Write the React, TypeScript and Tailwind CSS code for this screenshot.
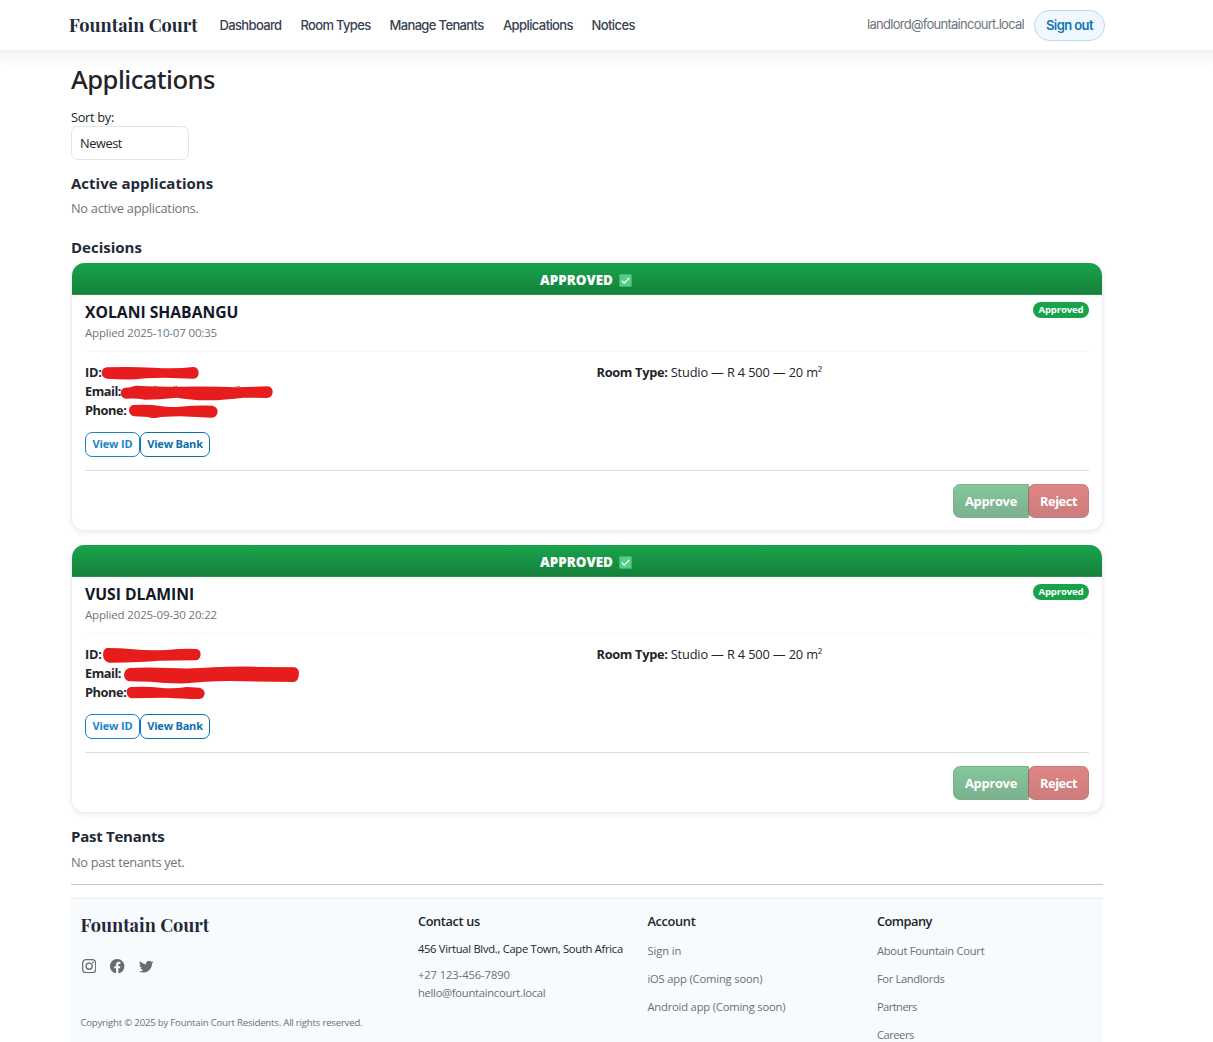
import type { ReactNode } from "react";
import { BsFacebook, BsInstagram, BsTwitter } from "react-icons/bs";

const sans = "font-['Open_Sans','Noto_Sans',sans-serif]";

type Link = { label: string; tracking: string };

const navLinks: Link[] = [
  { label: "Dashboard", tracking: "w-[81px] tracking-[-0.646px]" },
  { label: "Room Types", tracking: "w-[89px] tracking-[-0.68px]" },
  { label: "Manage Tenants", tracking: "w-[113.5px] tracking-[-0.647px]" },
  { label: "Applications", tracking: "w-[88.5px] tracking-[-0.603px]" },
  { label: "Notices", tracking: "tracking-[-0.6px]" },
];

function Header() {
  return (
    <header className="flex h-[51px] shrink-0 items-center border-b border-[#eeeef4] bg-white pr-[108px] pl-[69px] font-['Inter',sans-serif] text-[13px] shadow-[0_2px_16px_6px_rgba(0,0,0,0.05)]">
      <div className="w-[150.5px] font-['Playfair_Display','Liberation_Serif',serif] text-[18.2px] font-bold whitespace-nowrap text-[#1f2937]">
        Fountain Court
      </div>
      <nav className="flex pt-[2px] font-medium text-[#374151]">
        {navLinks.map((l) => (
          <a key={l.label} className={`whitespace-nowrap ${l.tracking}`}>
            {l.label}
          </a>
        ))}
      </nav>
      <div className="ml-auto flex items-center">
        <span className="mr-[10px] tracking-[-0.722px] text-[#6c757d]">landlord@fountaincourt.local</span>
        <button className="h-[31px] w-[71px] rounded-full border border-[#b5dcf2] bg-[#f0f8fd] pt-[2px] font-semibold tracking-[-0.586px] text-[#0f75b5]">
          Sign out
        </button>
      </div>
    </header>
  );
}

function ApprovedMark() {
  return (
    <svg width="13" height="13" viewBox="0 0 13 13" className="ml-[6px]">
      <rect x="0.5" y="0.5" width="12" height="12" rx="0.6" fill="#52ce85" stroke="#3fb873" strokeWidth="0.8" />
      <path d="M2.8 6.7 5.2 9.1 10.3 4" fill="none" stroke="#fff" strokeWidth="1.2" />
    </svg>
  );
}

const ink = "#e71d1d";

function FirstRedaction() {
  return (
    <svg width="220" height="60" viewBox="45 24 660 180" className="absolute top-0 left-0" fill={ink}>
      <path d="M112 37Q180 34 250 38T370 36Q386 38 386 53Q386 70 370 71L280 68Q220 68 200 73Q150 74 112 71Q95 68 95 54Q96 38 112 37Z" />
      <path d="M253 94h7M311 94h5M318 94h4M362 97h12M497 94h5M504 94h5" stroke="#6b1a1a" strokeWidth="2" />
      <path d="M166 98L182 97Q188 92 200 92Q260 95 330 95Q430 93 500 97L594 94Q609 98 608 112Q607 128 590 129L520 128Q470 135 410 136Q360 135 320 128Q270 134 225 134Q200 129 168 131Q152 128 152 114Q153 100 166 98Z" />
      <path d="M190 150Q240 148 270 153T330 155Q380 150 428 152Q443 156 443 170Q441 187 426 188L330 184Q280 185 262 188Q240 190 235 186L192 184Q177 180 177 166Q178 152 190 150Z" />
    </svg>
  );
}

function SecondRedaction() {
  return (
    <svg width="220" height="60" viewBox="45 15 660 180" className="absolute top-0 left-0" fill={ink}>
      <path d="M110 24Q150 24 190 28T290 30Q340 25 380 27Q392 31 392 44Q390 60 376 61L270 62Q220 66 118 68Q100 64 99 45Q99 28 110 24Z" />
      <path d="M178 84Q230 81 300 84T430 82Q520 78 580 81L675 82Q687 86 687 101Q685 124 672 126L480 123Q400 124 350 130Q290 131 240 125L176 124Q162 118 162 104Q164 88 178 84Z" />
      <path d="M182 141Q230 138 270 143T350 141L390 143Q405 149 404 161Q402 175 388 177Q330 176 290 173L184 175Q170 171 170 157Q170 144 182 141Z" />
    </svg>
  );
}

type Application = { name: string; applied: string; redaction: ReactNode };

const applications: Application[] = [
  { name: "XOLANI SHABANGU", applied: "2025-10-07 00:35", redaction: <FirstRedaction /> },
  { name: "VUSI DLAMINI", applied: "2025-09-30 20:22", redaction: <SecondRedaction /> },
];

function ApplicationCard({ app }: { app: Application }) {
  return (
    <article className="mb-[14px] h-[268px] overflow-hidden rounded-[13px] border border-t-0 border-[#ececf2] bg-white shadow-[0_2px_5px_rgba(0,0,0,0.07)]">
      <div className="flex h-[32px] items-center justify-center border-b border-[#30914f] bg-linear-to-b from-[#18a54b] to-[#15803b] pt-[4px] pr-[2px] text-[13.4px] font-extrabold text-white">
        APPROVED
        <ApprovedMark />
      </div>
      <div className="px-[13px]">
        <div className="flex h-[57px] justify-between border-b border-[#f8f8fa] pt-[7px]">
          <div>
            <h3 className="text-[15.7px] leading-[21px] font-bold text-[#111827]">{app.name}</h3>
            <p className="text-[11.5px] leading-[20px] tracking-[-0.165px] text-[#6c757d]">Applied {app.applied}</p>
          </div>
          <span className="flex h-[16px] w-[56px] items-center justify-center rounded-full bg-[#16a34a] text-[9.6px] font-bold tracking-[-0.158px] text-white">
            Approved
          </span>
        </div>
        <div className="grid grid-cols-[511.5px_1fr] pt-[11px] text-[12.8px] leading-[19px] text-[#212529]">
          <div className="relative font-bold">
            <p className="tracking-[-0.286px]">ID:</p>
            <p className="tracking-[-0.487px]">Email:</p>
            <p className="tracking-[-0.417px]">Phone:</p>
            {app.redaction}
          </div>
          <p className="tracking-[-0.152px]">
            <b className="tracking-[-0.319px]">Room Type:</b> Studio — R 4 500 — 20 m²
          </p>
        </div>
        <div className="mt-[12px] flex text-[11px] font-bold">
          <button className="h-[25px] w-[55px] rounded-[7px] border border-[#1b84cb] tracking-[-0.152px] text-[#1b84cb]">View ID</button>
          <button className="h-[25px] w-[70px] rounded-[7px] border border-[#0c6fae] tracking-[-0.208px] text-[#0c6fae]">View Bank</button>
        </div>
        <hr className="mt-[13px] border-[#dcdddf]" />
        <div className="mt-[13px] flex justify-end text-[12.8px] font-bold text-white">
          <button className="h-[34px] w-[76px] rounded-l-[7px] border border-[#78b28c] bg-linear-to-b from-[#84c79a] to-[#7cb18f] pt-[2px] tracking-[-0.23px]">
            Approve
          </button>
          <button className="-ml-px h-[34px] w-[61px] rounded-[7px] border border-[#cb7878] border-l-[#a86464] bg-linear-to-b from-[#df8585] to-[#cb7d7d] pt-[2px] tracking-[-0.435px]">
            Reject
          </button>
        </div>
      </div>
    </article>
  );
}

const accountLinks: Link[] = [
  { label: "Sign in", tracking: "tracking-[-0.071px]" },
  { label: "iOS app (Coming soon)", tracking: "tracking-[-0.164px]" },
  { label: "Android app (Coming soon)", tracking: "tracking-[-0.181px]" },
];

const companyLinks: Link[] = [
  { label: "About Fountain Court", tracking: "tracking-[-0.256px]" },
  { label: "For Landlords", tracking: "tracking-[-0.35px]" },
  { label: "Partners", tracking: "tracking-[-0.57px]" },
  { label: "Careers", tracking: "tracking-[-0.473px]" },
];

function LinkColumn({ title, titleTracking, links }: { title: string; titleTracking: string; links: Link[] }) {
  return (
    <div>
      <h4 className={`text-[12.8px] leading-[20px] font-semibold text-[#212529] ${titleTracking}`}>{title}</h4>
      <ul className="mt-[6px]">
        {links.map((l) => (
          <li key={l.label} className={`leading-[28px] whitespace-nowrap ${l.tracking}`}>
            {l.label}
          </li>
        ))}
      </ul>
    </div>
  );
}

function Footer() {
  return (
    <footer className="mt-[13px] grid h-[180px] grid-cols-[337.5px_229.5px_229.5px_1fr] border-t border-[#e9eaeb] bg-[#f7fbfe] pt-[12px] pl-[9.4px] text-[11.2px] text-[#6c6f73]">
      <div>
        <div className="font-['Playfair_Display','Liberation_Serif',serif] text-[18.2px] leading-[28px] font-bold text-[#1f2937]">
          Fountain Court
        </div>
        <div className="mt-[20px] ml-[1.6px] flex gap-[14px] text-[14.4px] text-[#6b6b6b]">
          <BsInstagram />
          <BsFacebook />
          <BsTwitter />
        </div>
        <p className="mt-[40px] text-[9.6px] leading-[20px] tracking-[-0.197px]">
          Copyright © 2025 by Fountain Court Residents. All rights reserved.
        </p>
      </div>
      <div>
        <h4 className="text-[12.8px] leading-[20px] font-semibold tracking-[-0.364px] text-[#212529]">Contact us</h4>
        <p className="mt-[9px] leading-[18px] tracking-[-0.286px] whitespace-nowrap text-[#212529]">
          456 Virtual Blvd., Cape Town, South Africa
        </p>
        <p className="mt-[8px] leading-[18px] tracking-[-0.079px]">+27 123-456-7890</p>
        <p className="leading-[18px] tracking-[-0.263px]">hello@fountaincourt.local</p>
      </div>
      <LinkColumn title="Account" titleTracking="tracking-[-0.33px]" links={accountLinks} />
      <LinkColumn title="Company" titleTracking="tracking-[-0.5px]" links={companyLinks} />
    </footer>
  );
}

export default function App() {
  return (
    <div className={`flex h-[1042px] flex-col overflow-hidden bg-white text-[12.8px] text-[#212529] ${sans}`}>
      <Header />
      <main className="ml-[71px] w-[1032px]">
        <h1 className="mt-[14px] font-['Noto_Sans',sans-serif] text-[25.6px] leading-[30px] font-medium tracking-[-0.53px]">
          Applications
        </h1>
        <label className="mt-[13px] block leading-[18px] tracking-[-0.305px]">Sort by:</label>
        <div className="flex h-[34px] w-[118px] items-center rounded-[7px] border border-[#e2e4e8] px-[8px] pt-[2px] tracking-[-0.432px]">
          Newest
        </div>
        <h2 className="mt-[13px] text-[15px] leading-[20px] font-bold text-[#1f2937]">Active applications</h2>
        <p className="mt-[6px] leading-[18px] tracking-[-0.277px] text-[#6c757d]">No active applications.</p>
        <h2 className="mt-[20px] mb-[6px] text-[15px] leading-[20px] font-bold text-[#1f2937]">Decisions</h2>
        {applications.map((a) => (
          <ApplicationCard key={a.name} app={a} />
        ))}
        <h2 className="-mt-px text-[15px] leading-[20px] font-bold tracking-[-0.262px] text-[#1f2937]">Past Tenants</h2>
        <p className="mt-[7px] leading-[18px] tracking-[-0.307px] text-[#6c757d]">No past tenants yet.</p>
        <hr className="mt-[13px] border-[#c6c7c8]" />
        <Footer />
      </main>
    </div>
  );
}
